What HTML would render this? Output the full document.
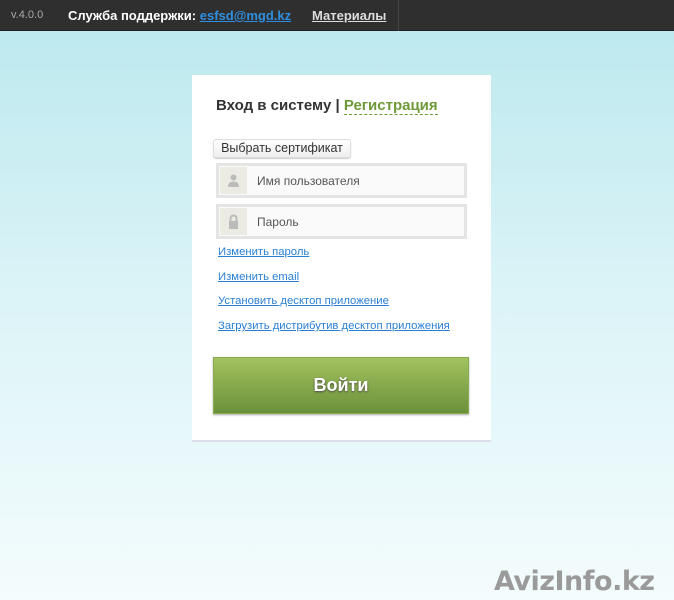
<!DOCTYPE html>
<html><head><meta charset="utf-8"><style>
*{margin:0;padding:0;box-sizing:border-box}
body{width:674px;height:600px;overflow:hidden;font-family:"Liberation Sans","DejaVu Sans",sans-serif;background:linear-gradient(#bde9ef 31px,#dcf4f7 300px,#f4fcfd 600px);position:relative}
.hdr{position:absolute;left:0;top:0;width:674px;height:31px;background:#2f2f2f;border-bottom:1px solid #222}
.hdr span{position:absolute;top:8px;font-size:13px}
.a{position:absolute}
.panel{position:absolute;left:192px;top:75px;width:299px;height:367px;background:#fff;border-bottom:2px solid #dde;}
.inp{position:absolute;left:216px;width:251px;height:35px;border:3px solid #e4e4e4;background:#fafafa}
.ic{position:absolute;left:1px;top:1px;width:27px;height:27px;background:#ebebe4}
.inp .t{position:absolute;left:38px;top:8px;font-size:12px;color:#555}
.lnk{position:absolute;left:218px;font-size:11.3px;color:#2a7fd4;text-decoration:underline}
</style></head><body>
<div class="hdr">
<span style="left:11px;color:#aaa;font-size:11px;top:9px">v.4.0.0</span>
<span style="left:68px;color:#fff;font-weight:bold">Служба поддержки: <u style="color:#2e8fe0">esfsd@mgd.kz</u></span>
<span style="left:312px;color:#ddd;font-weight:bold;text-decoration:underline">Материалы</span>
<div class="a" style="left:398px;top:0;width:1px;height:31px;background:#444"></div>
</div>
<div class="panel"></div>
<div class="a" style="left:216px;top:97px;font-size:15px;font-weight:bold;color:#333">Вход в систему <span style="color:#333">|</span> <span style="color:#6f9a3a;border-bottom:1px dashed #6f9a3a">Регистрация</span></div>
<div class="a" style="left:213px;top:139px;width:138px;height:19px;border:1px solid #ddd;border-radius:3px;background:linear-gradient(#fff,#eee);font-size:12.5px;color:#333;text-align:center;line-height:17px;box-shadow:0 1px 1px #ccc">Выбрать сертификат</div>
<div class="inp" style="top:163px"><div class="ic"><svg width="27" height="27"><circle cx="13.5" cy="10.5" r="3" fill="#bbb"/><path d="M8 20 Q8 14.5 13.5 14.5 Q19 14.5 19 20Z" fill="#bbb"/></svg></div><div class="t">Имя пользователя</div></div>
<div class="inp" style="top:204px"><div class="ic"><svg width="27" height="27"><path d="M10.5 13V10.5a3 3 0 0 1 6 0V13" stroke="#bbb" stroke-width="2" fill="none"/><rect x="9" y="13" width="9" height="8" fill="#bbb"/></svg></div><div class="t">Пароль</div></div>
<div class="lnk" style="top:246px">Изменить пароль</div>
<div class="lnk" style="top:271px">Изменить email</div>
<div class="lnk" style="top:295px">Установить десктоп приложение</div>
<div class="lnk" style="top:320px">Загрузить дистрибутив десктоп приложения</div>
<div class="a" style="left:213px;top:357px;width:256px;height:57px;background:linear-gradient(#a3c15f,#6a913a);border:1px solid #8aab50;box-shadow:0 1px 2px #aaa;color:#fff;font-size:18px;font-weight:bold;text-align:center;line-height:55px;text-shadow:0 1px 2px #444">Войти</div>
<div class="a" style="left:494px;top:566px;font-size:27px;font-weight:bold;color:#9a9a9a;font-family:'DejaVu Sans',sans-serif;letter-spacing:-0.5px">AvizInfo.kz</div>
</body></html>
